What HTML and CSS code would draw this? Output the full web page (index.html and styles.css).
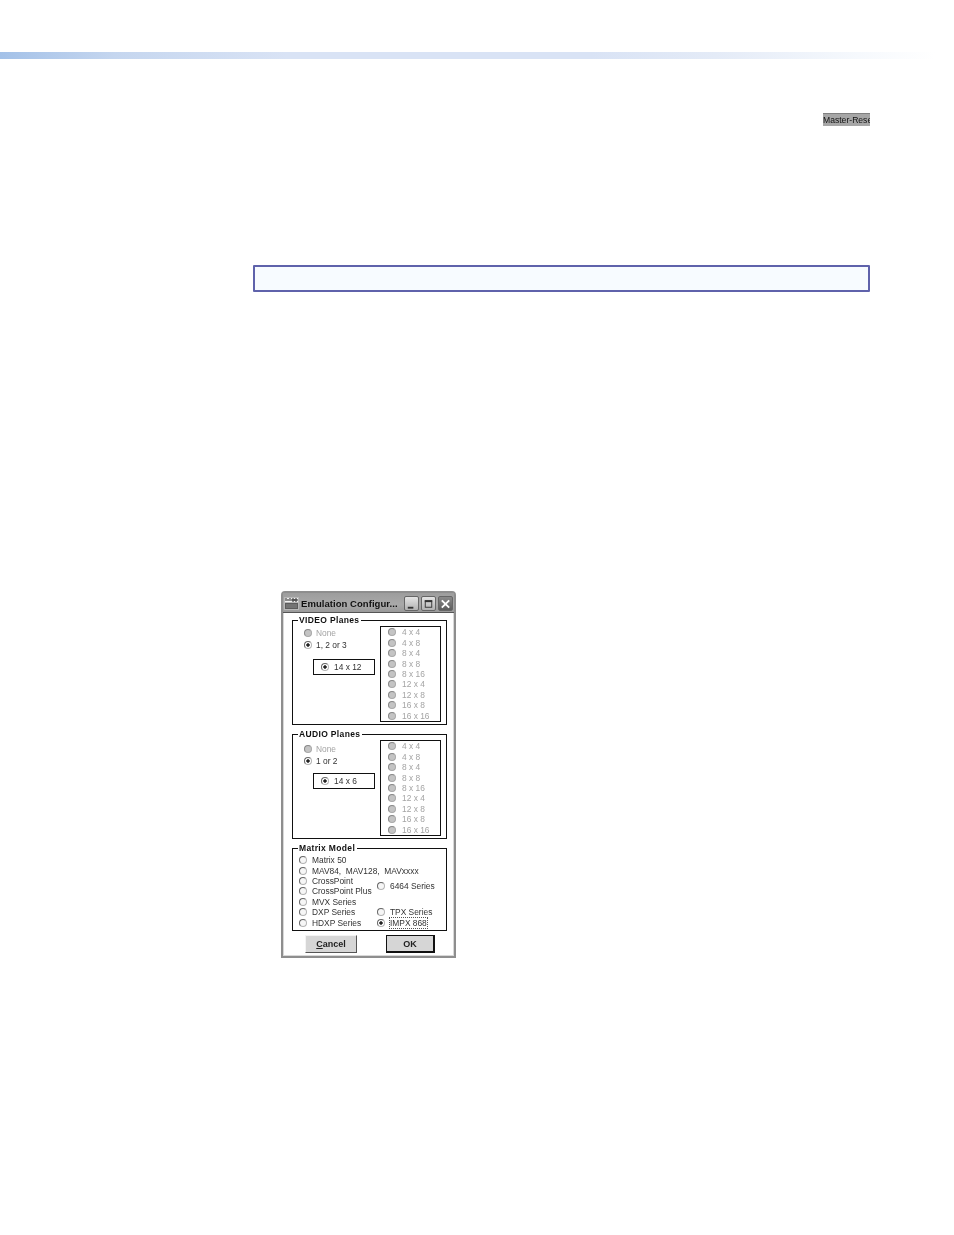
FILE: index.html
```html
<!DOCTYPE html>
<html lang="en">
<head>
<meta charset="utf-8">
<title>Emulation Configuration</title>
<link rel="stylesheet" href="styles.css">
</head>
<body>
<div class="band"></div>
<div class="master"><span>Master-Reset</span></div>
<div class="note"></div>
<div class="window">
  <div class="titlebar">
    <svg class="appicon" width="15" height="13" viewBox="0 0 15 13">
      <rect x="0" y="0" width="15" height="13" fill="#b9b9b9"/>
      <rect x="1" y="1" width="13" height="4" fill="#f2f2f2"/>
      <path d="M2 1v3M4 2v2M6 1v3M8 2h2v2h-2zM11 2h2v2h-2z" stroke="#222" stroke-width="1" fill="none"/>
      <rect x="1" y="6" width="13" height="6" fill="#5c5c5c"/>
      <path d="M2 8h11M2 10h11" stroke="#8b8b8b" stroke-width="1"/>
    </svg>
    <span class="title">Emulation Configur...</span>
    <div class="winbtns">
      <div class="winbtn"><svg width="14" height="14" viewBox="0 0 14 14"><rect x="3" y="10" width="6" height="2" fill="#333"/></svg></div>
      <div class="winbtn"><svg width="14" height="14" viewBox="0 0 14 14"><rect x="3.5" y="3.5" width="7" height="7" fill="none" stroke="#333"/><rect x="3" y="3" width="8" height="2" fill="#333"/></svg></div>
      <div class="winbtn close"><svg width="14" height="14" viewBox="0 0 14 14"><path d="M3 3l8 8M11 3l-8 8" stroke="#fff" stroke-width="2"/></svg></div>
    </div>
  </div>
  <div class="client">
    <div class="group planes">
      <span class="legend">VIDEO Planes</span>
      <div class="leftcol">
        <div class="radio dim"><i></i>None</div>
        <div class="radio on"><i></i>1, 2 or 3</div>
        <div class="sizebox"><div class="radio on"><i></i>14 x 12</div></div>
      </div>
      <div class="listbox">
        <div class="radio dim"><i></i>4 x 4</div>
        <div class="radio dim"><i></i>4 x 8</div>
        <div class="radio dim"><i></i>8 x 4</div>
        <div class="radio dim"><i></i>8 x 8</div>
        <div class="radio dim"><i></i>8 x 16</div>
        <div class="radio dim"><i></i>12 x 4</div>
        <div class="radio dim"><i></i>12 x 8</div>
        <div class="radio dim"><i></i>16 x 8</div>
        <div class="radio dim"><i></i>16 x 16</div>
      </div>
    </div>
    <div class="group planes">
      <span class="legend">AUDIO Planes</span>
      <div class="leftcol lower">
        <div class="radio dim"><i></i>None</div>
        <div class="radio on"><i></i>1 or 2</div>
        <div class="sizebox"><div class="radio on"><i></i>14 x 6</div></div>
      </div>
      <div class="listbox">
        <div class="radio dim"><i></i>4 x 4</div>
        <div class="radio dim"><i></i>4 x 8</div>
        <div class="radio dim"><i></i>8 x 4</div>
        <div class="radio dim"><i></i>8 x 8</div>
        <div class="radio dim"><i></i>8 x 16</div>
        <div class="radio dim"><i></i>12 x 4</div>
        <div class="radio dim"><i></i>12 x 8</div>
        <div class="radio dim"><i></i>16 x 8</div>
        <div class="radio dim"><i></i>16 x 16</div>
      </div>
    </div>
    <div class="group model">
      <span class="legend">Matrix Model</span>
      <div class="radio r1"><i></i>Matrix 50</div>
      <div class="radio r2"><i></i>MAV84,&nbsp; MAV128,&nbsp; MAVxxxx</div>
      <div class="radio r3"><i></i>CrossPoint</div>
      <div class="radio r4"><i></i>CrossPoint Plus</div>
      <div class="radio r5"><i></i>MVX Series</div>
      <div class="radio r6"><i></i>DXP Series</div>
      <div class="radio r7"><i></i>HDXP Series</div>
      <div class="radio c2 span"><i></i>6464 Series</div>
      <div class="radio c2 r6"><i></i>TPX Series</div>
      <div class="radio c2 r7 on"><i></i><span class="focus">IMPX 868</span></div>
    </div>
    <div class="actions">
      <div class="btn"><span class="u">C</span>ancel</div>
      <div class="btn default">OK</div>
    </div>
  </div>
</div>
</body>
</html>
```
FILE: styles.css
```css
html, body { margin: 0; padding: 0; background: #fff; }
body { width: 954px; height: 1235px; overflow: hidden; font-family: "Liberation Sans", Arial, sans-serif; }

.band { height: 7px; margin-top: 52px; background: linear-gradient(90deg, #a3c1e8 0%, #c5d6ef 12%, #d9e3f5 30%, #d9e3f5 62%, #e4ebf7 75%, #f6f9fd 90%, #fff 98%); }

.master { width: 47px; height: 13px; margin: 54px 0 0 823px; overflow: hidden; background: #a6a6a6; border-top: 1px solid #808080; box-sizing: border-box; font-size: 8.6px; line-height: 13px; color: #111; white-space: nowrap; display: flex; justify-content: flex-start; filter: blur(.3px); }
.master span { flex: none; }

.note { box-sizing: border-box; width: 617px; height: 27px; margin: 139px 0 0 253px; border: 2px solid #5f62ab; border-radius: 1px; background: #f7fbff; }

.window { box-sizing: border-box; width: 175px; height: 367px; margin: 299px 0 0 281px; display: flex; flex-direction: column; background: #fff; border: 2px solid #8e8e8e; border-radius: 4px 4px 0 0; box-shadow: inset 0 0 0 1px #d8d8d8; filter: blur(.35px); }

.titlebar { height: 19px; flex: none; display: flex; align-items: center; padding: 2px 1px 0 1px; box-sizing: border-box; background: linear-gradient(#9d9d9d, #a9a9a9 60%, #9a9a9a); gap: 2px; }
.appicon { flex: none; }
.title { flex: 1; font-size: 9.5px; font-weight: bold; letter-spacing: .05px; color: #111; white-space: nowrap; overflow: hidden; }
.winbtns { display: flex; gap: 2px; flex: none; }
.winbtn { width: 15px; height: 15px; box-sizing: border-box; border: 1px solid #666; border-radius: 2px; background: linear-gradient(#e4e4e4, #b2b2b2); display: flex; align-items: center; justify-content: center; }
.winbtn.close { background: linear-gradient(#8a8a8a, #5c5c5c); }

.client { flex: 1; display: flex; flex-direction: column; padding: 7px 8px 0 9px; border-top: 1px solid #555; font-size: 8.4px; color: #333; }

.group { position: relative; box-sizing: border-box; width: 155px; border: 1px solid #111; }
.planes { height: 105px; margin-bottom: 9px; display: flex; justify-content: space-between; padding: 5px 5px 2px 11px; }
.legend { position: absolute; top: -6px; left: 5px; padding: 0 2px 0 1px; background: #fff; font-size: 8.5px; line-height: 11px; font-weight: bold; letter-spacing: .35px; color: #111; white-space: nowrap; }

.radio { display: flex; align-items: center; gap: 4px; height: 10.45px; line-height: 10px; white-space: nowrap; }
.radio i { flex: none; box-sizing: border-box; width: 8px; height: 8px; border-radius: 50%; background: #f6f6f6; border: 1px solid #b5b5b5; border-top-color: #666; border-left-color: #666; }
.radio.on i { background: radial-gradient(circle, #222 0 1.4px, #fff 2px); }
.radio.dim { color: #a4a4a4; }
.radio.dim i { background: #c4c4c4; border-color: #aaa; border-top-color: #888; border-left-color: #888; }

.leftcol { display: flex; flex-direction: column; align-items: flex-start; padding-top: 1px; }
.leftcol > .radio { height: 12px; }
.sizebox { box-sizing: border-box; width: 62px; height: 16px; margin: 8px 0 0 9px; padding-left: 7px; display: flex; align-items: center; border: 1px solid #111; }
.sizebox .radio { gap: 5px; }
.leftcol.lower { padding-top: 3px; }
.leftcol.lower .sizebox { margin-top: 6px; }

.listbox { box-sizing: border-box; width: 61px; height: 96px; padding: 0 0 0 7px; border: 1px solid #111; }
.listbox .radio { gap: 6px; }

.model { height: 83px; padding: 6px 0 0 6px; display: grid; grid-template-columns: 78px 1fr; grid-template-rows: repeat(7, 10.4px); }
.model .radio { grid-column: 1; gap: 5px; }
.model .r1 { grid-row: 1; }
.model .r2 { grid-row: 2; }
.model .r3 { grid-row: 3; }
.model .r4 { grid-row: 4; }
.model .r5 { grid-row: 5; }
.model .r6 { grid-row: 6; }
.model .r7 { grid-row: 7; }
.model .c2 { grid-column: 2; }
.model .span { grid-row: 3 / 5; align-self: center; }
.focus { outline: 1px dotted #555; outline-offset: 0; }

.actions { display: flex; padding: 4px 0 0 13px; gap: 29px; }
.btn { box-sizing: border-box; width: 52px; height: 18px; display: flex; align-items: center; justify-content: center; background: #d6d6d6; border: 1px solid; border-color: #f4f4f4 #555 #555 #f4f4f4; font-size: 9px; font-weight: bold; color: #222; }
.btn.default { width: 49px; border: 1px solid #111; border-right-width: 2px; border-bottom-width: 2px; }
.u { text-decoration: underline; }
```
